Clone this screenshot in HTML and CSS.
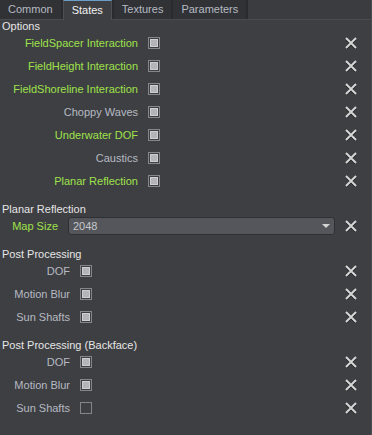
FILE: index.html
```html
<!DOCTYPE html>
<html lang="en">
<head>
  <meta charset="UTF-8">
  <title>Water Settings</title>
  <meta name="viewport" content="width=device-width, initial-scale=1.0">
  <link rel="stylesheet" href="styles.css">
</head>
<body>
  <div class="tabs">
    <div class="tab">Common</div>
    <div class="tab active">States</div>
    <div class="tab">Textures</div>
    <div class="tab">Parameters</div>
    <div class="tab-fill"></div>
  </div>

  <div class="panel">
    <section class="group options">
      <div class="group-title">Options</div>
      <div class="row"><span class="label on">FieldSpacer Interaction</span><span class="check checked"></span><span class="remove"></span></div>
      <div class="row"><span class="label on">FieldHeight Interaction</span><span class="check checked"></span><span class="remove"></span></div>
      <div class="row"><span class="label on">FieldShoreline Interaction</span><span class="check checked"></span><span class="remove"></span></div>
      <div class="row"><span class="label">Choppy Waves</span><span class="check checked"></span><span class="remove"></span></div>
      <div class="row"><span class="label on">Underwater DOF</span><span class="check checked"></span><span class="remove"></span></div>
      <div class="row"><span class="label">Caustics</span><span class="check checked"></span><span class="remove"></span></div>
      <div class="row"><span class="label on">Planar Reflection</span><span class="check checked"></span><span class="remove"></span></div>
    </section>

    <section class="group planar">
      <div class="group-title">Planar Reflection</div>
      <div class="row">
        <span class="label on">Map Size</span>
        <div class="combo"><span>2048</span><i class="arrow"></i></div>
        <span class="remove"></span>
      </div>
    </section>

    <section class="group post">
      <div class="group-title">Post Processing</div>
      <div class="row"><span class="label">DOF</span><span class="check checked"></span><span class="remove"></span></div>
      <div class="row"><span class="label">Motion Blur</span><span class="check checked"></span><span class="remove"></span></div>
      <div class="row"><span class="label">Sun Shafts</span><span class="check checked"></span><span class="remove"></span></div>
    </section>

    <section class="group post">
      <div class="group-title">Post Processing (Backface)</div>
      <div class="row"><span class="label">DOF</span><span class="check checked"></span><span class="remove"></span></div>
      <div class="row"><span class="label">Motion Blur</span><span class="check checked"></span><span class="remove"></span></div>
      <div class="row"><span class="label">Sun Shafts</span><span class="check"></span><span class="remove"></span></div>
    </section>
  </div>

  <script>
    // same cross icon for every reset button
    const cross = '<svg width="12" height="12" viewBox="0 0 12 12">' +
      '<path d="M1.5 2.5 L10.5 11.5 M10.5 2.5 L1.5 11.5" stroke="#1b1c1e" stroke-width="2" fill="none"/>' +
      '<path d="M1 1 L11 11 M11 1 L1 11" stroke="#d6d6d6" stroke-width="2" fill="none"/>' +
      '</svg>';
    document.querySelectorAll('.remove').forEach(el => { el.innerHTML = cross; });
  </script>
</body>
</html>
```

FILE: styles.css
```css
:root {
  --bg: #3e3f43;
  --tab: #313236;
  --text: #e6e6e6;
  --dim: #b6bac2;
  --green: #9ee24a;
}

* {
  box-sizing: border-box;
  margin: 0;
  padding: 0;
}

body {
  background: var(--bg);
  color: var(--text);
  font-family: 'Liberation Sans', Arial, sans-serif;
  font-size: 11px;
  width: 372px;
  height: 435px;
  overflow: hidden;
  border-right: 1px solid #4c4d52;
}

.tabs {
  display: flex;
  height: 20px;
  gap: 2px;
  background: #2a2b2e;
  border-bottom: 1px solid #4a4b50;
}

.tab {
  padding: 0 8px;
  line-height: 19px;
  background: var(--tab);
  color: var(--dim);
}

.tab.active {
  background: var(--bg);
  color: #f2f2f2;
  border-top: 1px solid #6a9cc8;
  line-height: 18px;
  height: 20px;
  margin-bottom: -1px;
  border-left: 1px solid #4f5055;
  border-right: 1px solid #4f5055;
}

.tab-fill {
  flex: 1;
  background: #3b3c40;
}

.panel {
  padding-right: 14px;
}

.group + .group {
  margin-top: 12px;
}

.group-title {
  line-height: 12px;
  padding-left: 2px;
  color: var(--text);
}

.row {
  display: grid;
  grid-template-columns: var(--lw) 1fr 12px;
  column-gap: 10px;
  align-items: center;
  height: 21px;
  margin-bottom: 2px;
}

.options { --lw: 138px; }
.planar { --lw: 58px; }
.post { --lw: 70px; }

.label {
  text-align: right;
  color: var(--dim);
  white-space: nowrap;
}

.label.on {
  color: var(--green);
}

.check {
  width: 12px;
  height: 12px;
  border: 1px solid #85868a;
  display: flex;
  align-items: center;
  justify-content: center;
}

.check.checked::after {
  content: '';
  width: 6px;
  height: 6px;
  background: #b4b4b6;
  border: 1px solid #cfcfd1;
}

.combo {
  height: 18px;
  background: #55565b;
  border: 1px solid #2f3033;
  border-radius: 3px;
  display: flex;
  align-items: center;
  justify-content: space-between;
  padding: 0 4px 0 4px;
  color: #c4c6cc;
}

.arrow {
  width: 0;
  height: 0;
  border-left: 4px solid transparent;
  border-right: 4px solid transparent;
  border-top: 4px solid #d4d4d4;
  margin-top: 1px;
}

.remove {
  display: flex;
  width: 12px;
  height: 12px;
}
```
